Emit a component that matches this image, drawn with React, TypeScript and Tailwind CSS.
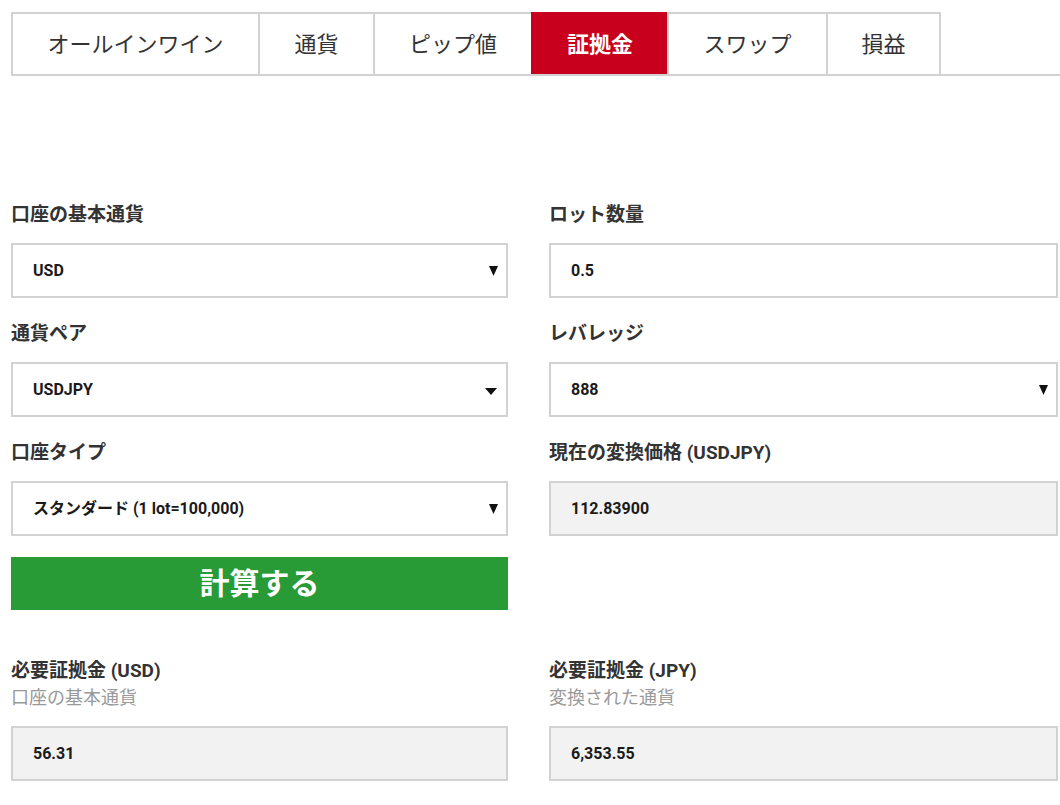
import React from 'react';

const font = { fontFamily: 'Roboto, "Noto Sans CJK JP", sans-serif' };

const tabs = ['オールインワイン', '通貨', 'ピップ値', '証拠金', 'スワップ', '損益'];
const tabWidths = ['w-[247px]', 'w-[115px]', 'w-[158px]', 'w-[136px]', 'w-[159px]', 'w-[115px]'];

const Caret: React.FC<{ wide?: boolean }> = ({ wide }) =>
  wide ? (
    <svg width="12" height="8" viewBox="0 0 12 8" className="mt-[4px]">
      <path d="M0 0h12L6 7z" fill="#111" />
    </svg>
  ) : (
    <svg width="9" height="10" viewBox="0 0 9 10">
      <path d="M0 0h9L4.5 10z" fill="#111" />
    </svg>
  );

const Field: React.FC<{
  label: string;
  sub?: string;
  value: string;
  select?: boolean;
  wide?: boolean;
  readOnly?: boolean;
}> = ({ label, sub, value, select, wide, readOnly }) => (
  <div className="flex flex-col">
    <div className="text-[19px] leading-[24px] font-bold text-[#333]">{label}</div>
    {sub && <div className="text-[18px] leading-[24px] text-[#999] mt-[3px]">{sub}</div>}
    <div
      className={`mt-[16px] h-[55px] border-2 border-[#d2d2d2] flex items-center justify-between pl-[20px] ${
        wide ? 'pr-[9px]' : 'pr-[8px]'
      } ${readOnly ? 'bg-[#f2f2f2]' : 'bg-white'}`}
    >
      <span className="text-[16px] font-bold text-[#1a1a1a]">{value}</span>
      {select && <Caret wide={wide} />}
    </div>
  </div>
);

export default function App() {
  return (
    <div className="w-[1060px] min-h-[805px] bg-white pt-[12px]" style={font}>
      <div className="flex ml-[11px] border-b-2 border-[#d2d2d2]">
        {tabs.map((t, i) => {
          const active = i === 3;
          return (
            <div
              key={t}
              className={`${tabWidths[i]} h-[62px] flex items-center justify-center text-[22px] border-t-2 border-l-2 ${
                i === tabs.length - 1 ? 'border-r-2' : ''
              } ${
                active
                  ? 'bg-[#c8001e] border-[#c8001e] text-white font-bold'
                  : 'border-[#d2d2d2] text-[#333]'
              }`}
            >
              {t}
            </div>
          );
        })}
      </div>

      <div className="grid grid-cols-[497px_509px] gap-x-[41px] pl-[11px] mt-[127px]">
        <div className="flex flex-col gap-[24px]">
          <Field label="口座の基本通貨" value="USD" select />
          <Field label="通貨ペア" value="USDJPY" select wide />
          <Field label="口座タイプ" value="スタンダード (1 lot=100,000)" select />
          <button className="-mt-[3px] h-[53px] bg-[#289a36] text-white text-[30px] font-bold flex items-center justify-center">
            計算する
          </button>
        </div>
        <div className="flex flex-col gap-[24px]">
          <Field label="ロット数量" value="0.5" />
          <Field label="レバレッジ" value="888" select />
          <Field label="現在の変換価格 (USDJPY)" value="112.83900" readOnly />
        </div>
      </div>

      <div className="grid grid-cols-[497px_509px] gap-x-[41px] pl-[11px] mt-[49px]">
        <Field label="必要証拠金 (USD)" sub="口座の基本通貨" value="56.31" readOnly />
        <Field label="必要証拠金 (JPY)" sub="変換された通貨" value="6,353.55" readOnly />
      </div>
    </div>
  );
}
